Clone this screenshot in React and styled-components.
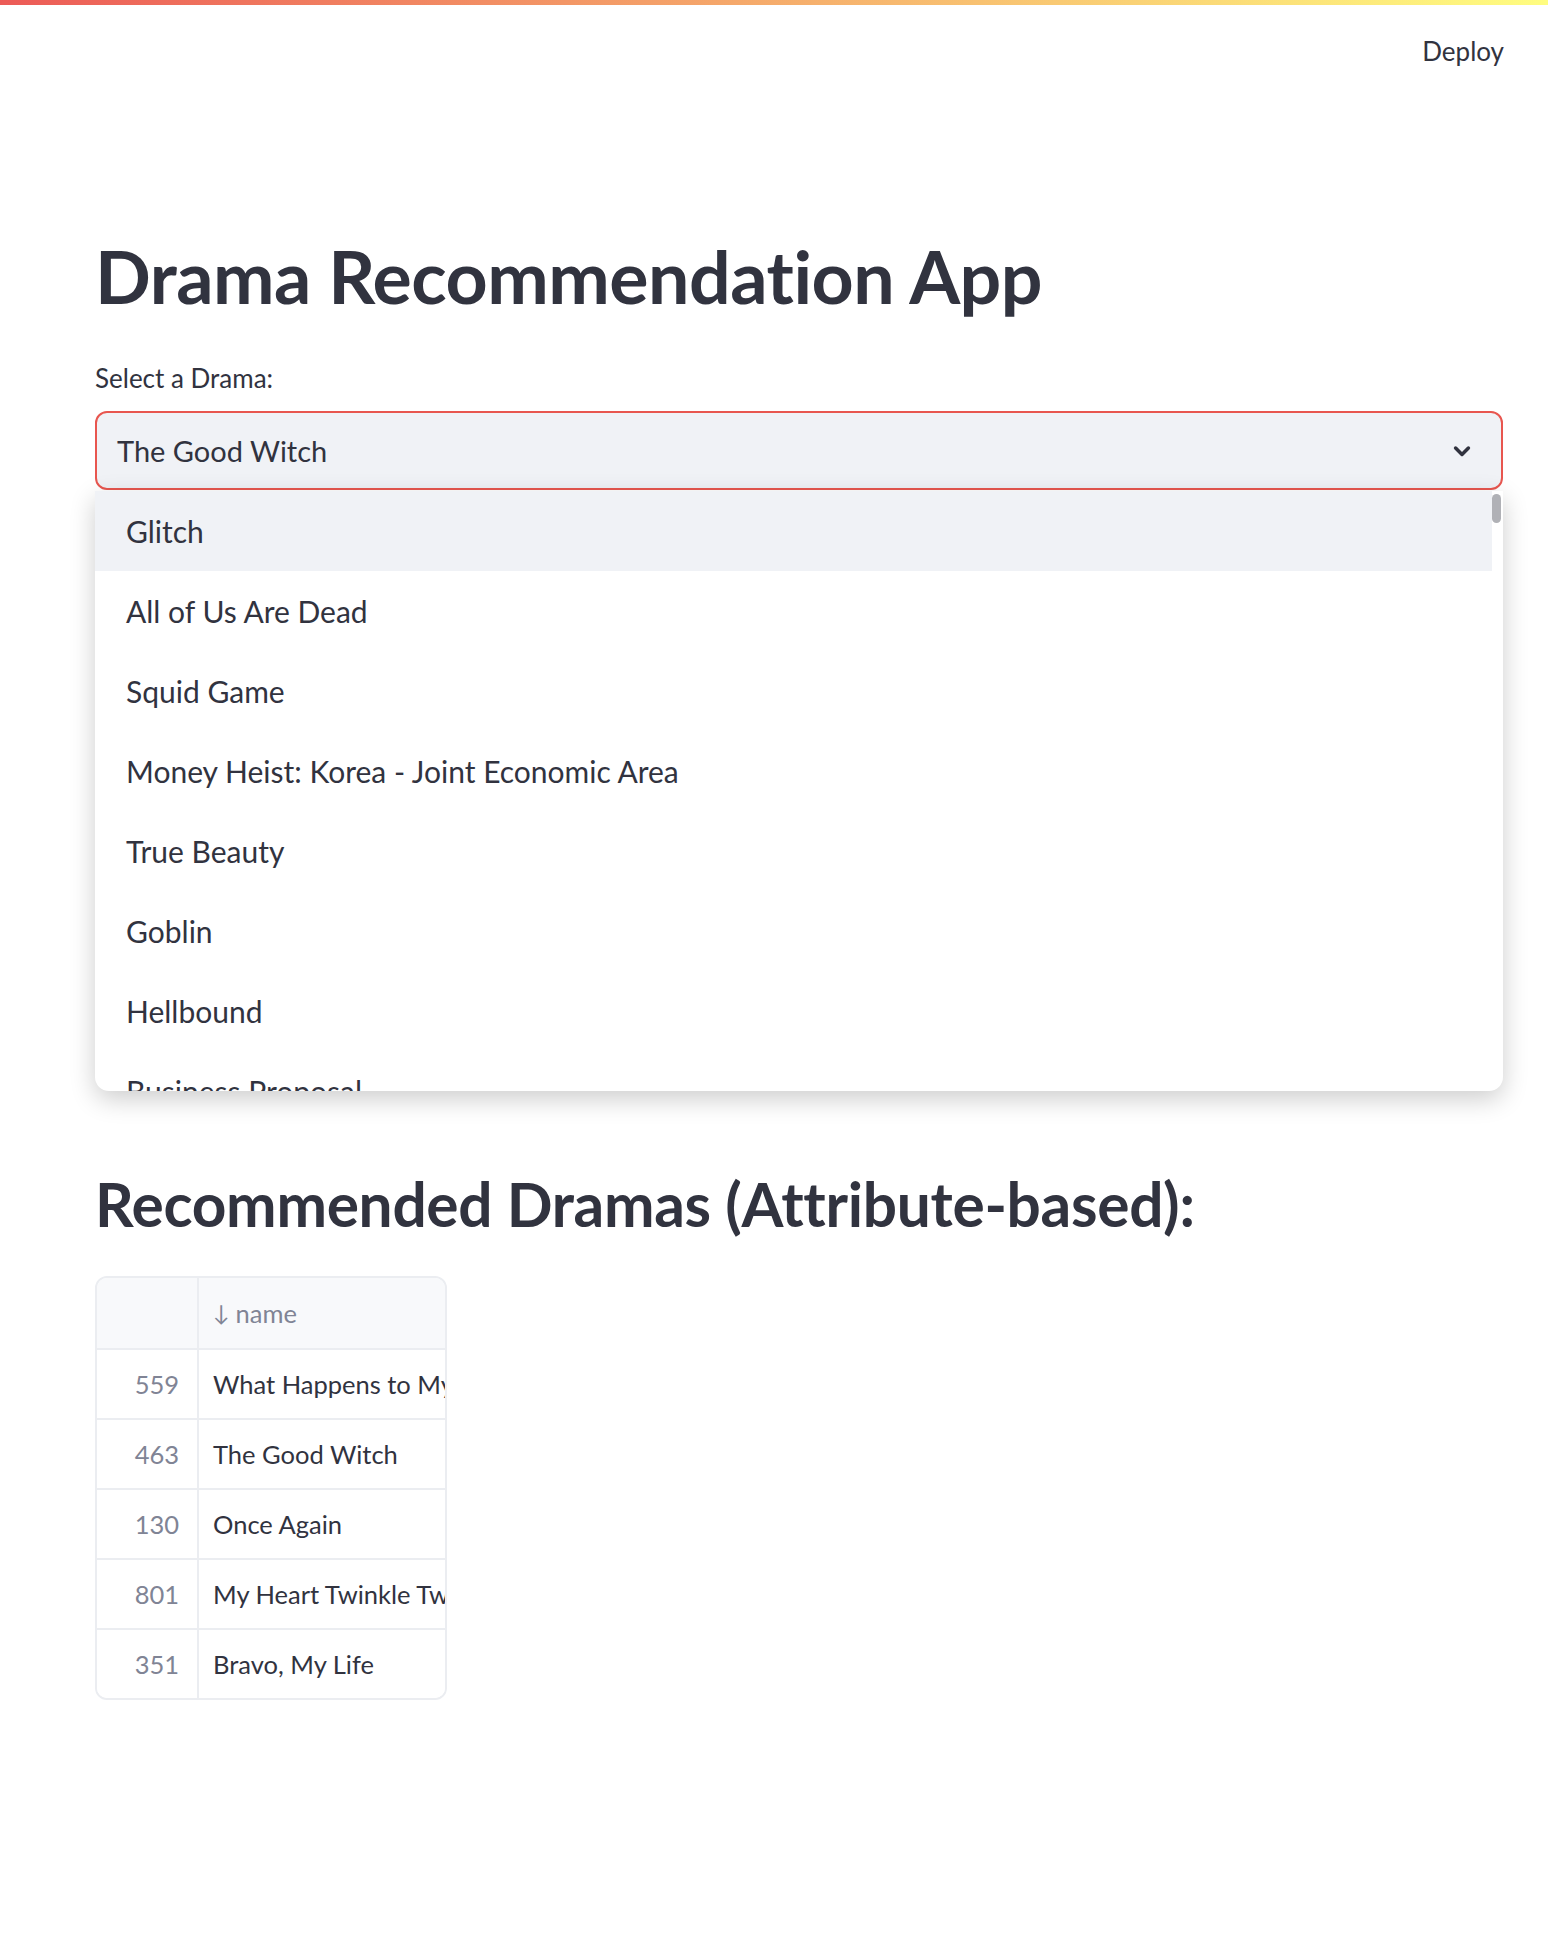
import React from 'react';
import styled, { createGlobalStyle } from 'styled-components';

const GlobalStyle = createGlobalStyle`
  body {
    margin: 0;
    background: #ffffff;
    font-family: Lato, "Noto Sans", sans-serif;
    color: #31333f;
  }
`;

const Decoration = styled.div`
  height: 5px;
  background: linear-gradient(90deg, #ec5b57, #fffd80);
`;

const Header = styled.header`
  height: 92px;
  display: flex;
  justify-content: flex-end;
  align-items: center;
  padding-right: 44px;
`;

const Deploy = styled.span`
  font-size: 26px;
  color: #31333f;
`;

const Main = styled.main`
  padding: 135px 45px 200px 95px;
`;

const Title = styled.h1`
  margin: 0;
  font-size: 73.5px;
  line-height: 1.2;
  font-weight: 700;
  letter-spacing: -0.5px;
`;

const Label = styled.div`
  margin-top: 40px;
  font-size: 26px;
  line-height: 37px;
`;

const SelectWrap = styled.div`
  position: relative;
  margin-top: 14px;
`;

const SelectBox = styled.div`
  height: 79px;
  box-sizing: border-box;
  border: 2px solid #e8564f;
  border-radius: 12px;
  background: #f0f2f6;
  display: flex;
  align-items: center;
  justify-content: space-between;
  padding: 0 25px 0 20px;
  font-size: 29px;
`;

const Menu = styled.div`
  position: absolute;
  top: 80px;
  left: 0;
  right: 0;
  height: 600px;
  overflow: hidden;
  background: #ffffff;
  border-radius: 0 0 14px 14px;
  box-shadow: 0 8px 26px rgba(0, 0, 0, 0.2);
  z-index: 2;
`;

const Option = styled.div`
  height: 80px;
  display: flex;
  align-items: center;
  padding-left: 31px;
  margin-right: 11px;
  font-size: 30px;
  background: ${props => (props.active ? '#f0f2f6' : 'transparent')};
`;

const Thumb = styled.div`
  position: absolute;
  top: 3px;
  right: 2px;
  width: 9px;
  height: 29px;
  border-radius: 5px;
  background: #b0b1b6;
`;

const Subtitle = styled.h2`
  margin: 678px 0 0;
  font-size: 60.4px;
  line-height: 1.2;
  font-weight: 700;
  letter-spacing: -0.3px;
`;

const Table = styled.div`
  margin-top: 35px;
  width: 352px;
  box-sizing: border-box;
  border: 2px solid #ebedf1;
  border-radius: 12px;
  overflow: hidden;
  display: grid;
  grid-template-columns: 100px 1fr;
`;

const Cell = styled.div`
  height: 70px;
  box-sizing: border-box;
  display: flex;
  align-items: center;
  white-space: nowrap;
  overflow: hidden;
  font-size: 25.5px;
  border-top: ${props => (props.first ? 'none' : '2px solid #ebedf1')};
  border-left: ${props => (props.index ? 'none' : '2px solid #ebedf1')};
  justify-content: ${props => (props.index ? 'flex-end' : 'flex-start')};
  padding: ${props => (props.index ? '0 18px 0 0' : '0 0 0 14px')};
  color: ${props => (props.muted ? '#808495' : '#31333f')};
  background: ${props => (props.head ? '#f8f9fb' : '#ffffff')};
`;

const Arrow = styled.span`
  margin-right: 6px;
  font-size: 22px;
`;

const options = [
  'Glitch',
  'All of Us Are Dead',
  'Squid Game',
  'Money Heist: Korea - Joint Economic Area',
  'True Beauty',
  'Goblin',
  'Hellbound',
  'Business Proposal',
];

const rows = [
  [559, 'What Happens to My Family?'],
  [463, 'The Good Witch'],
  [130, 'Once Again'],
  [801, 'My Heart Twinkle Twinkle'],
  [351, 'Bravo, My Life'],
];

const Chevron = () => (
  <svg width="28" height="28" viewBox="0 0 24 24" fill="none">
    <path
      d="M6.5 9.5l5.5 5.5 5.5-5.5"
      stroke="#31333f"
      strokeWidth="3"
      strokeLinecap="round"
      strokeLinejoin="round"
    />
  </svg>
);

const App = () => (
  <>
    <GlobalStyle />
    <Decoration />
    <Header>
      <Deploy>Deploy</Deploy>
    </Header>
    <Main>
      <Title>Drama Recommendation App</Title>
      <Label>Select a Drama:</Label>
      <SelectWrap>
        <SelectBox>
          <span>The Good Witch</span>
          <Chevron />
        </SelectBox>
        <Menu>
          <Thumb />
          {options.map((name, i) => (
            <Option key={name} active={i === 0}>
              {name}
            </Option>
          ))}
        </Menu>
      </SelectWrap>
      <Subtitle>Recommended Dramas (Attribute-based):</Subtitle>
      <Table>
        <Cell index head first />
        <Cell head first muted>
          <Arrow>↓</Arrow>name
        </Cell>
        {rows.map(([id, name]) => (
          <React.Fragment key={id}>
            <Cell index muted>
              {id}
            </Cell>
            <Cell>{name}</Cell>
          </React.Fragment>
        ))}
      </Table>
    </Main>
  </>
);

export default App;
